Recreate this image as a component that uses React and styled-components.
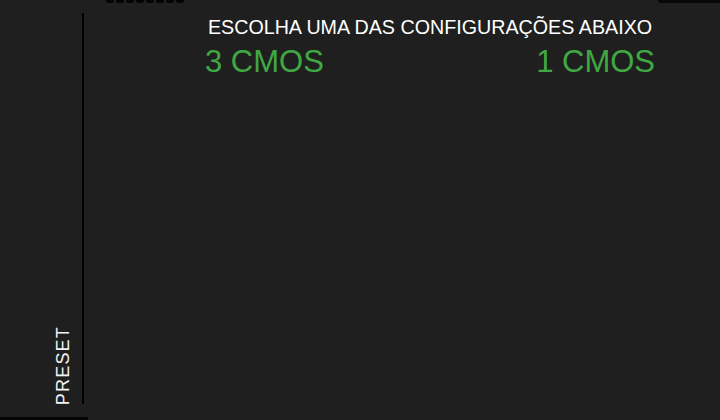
import styled, { createGlobalStyle } from "styled-components";

const GlobalStyle = createGlobalStyle`
  html, body {
    margin: 0;
    padding: 0;
    background: #1f1f1f;
  }
  body {
    font-family: "Liberation Sans", Arial, sans-serif;
  }
`;

const App = () => {
  return (
    <Screen>
      <GlobalStyle />
      <TopBumps>
        {Array.from({ length: 8 }).map((_, i) => (
          <Bump key={i} />
        ))}
      </TopBumps>
      <TopEdge />
      <Sidebar>
        <SideLabel>PRESET</SideLabel>
      </Sidebar>
      <BottomEdge />
      <Main>
        <Panel>
          <Title>ESCOLHA UMA DAS CONFIGURAÇÕES ABAIXO</Title>
          <Options>
            <Option>3 CMOS</Option>
            <Option>1 CMOS</Option>
          </Options>
        </Panel>
      </Main>
    </Screen>
  );
};

const Screen = styled.div`
  position: relative;
  width: 720px;
  height: 420px;
  overflow: hidden;
  display: flex;
  background: #1f1f1f;
`;

const TopBumps = styled.div`
  position: absolute;
  top: -2px;
  left: 106px;
  display: flex;
  gap: 2px;
`;

const Bump = styled.div`
  width: 8px;
  height: 5px;
  border-radius: 3px;
  background: #050505;
`;

const TopEdge = styled.div`
  position: absolute;
  top: 0;
  right: 0;
  width: 62px;
  height: 3px;
  border-bottom-left-radius: 3px;
  background: #080808;
`;

const BottomEdge = styled.div`
  position: absolute;
  left: 0;
  bottom: 0;
  width: 88px;
  height: 3px;
  background: #050505;
`;

const Sidebar = styled.div`
  width: 72px;
  margin: 13px 0 16px;
  padding-right: 10px;
  border-right: 2px solid #000;
  display: flex;
  align-items: flex-end;
  justify-content: flex-end;
`;

const SideLabel = styled.div`
  writing-mode: vertical-rl;
  transform: rotate(180deg);
  color: #f2f2f2;
  font-size: 18px;
  letter-spacing: 1.2px;
  line-height: 1;
  margin-bottom: -1px;
`;

const Main = styled.div`
  flex: 1;
  padding: 16px 0 0 121px;
`;

const Panel = styled.div`
  width: 450px;
  display: flex;
  flex-direction: column;
`;

const Title = styled.div`
  color: #ffffff;
  font-size: 19.7px;
  text-align: center;
  line-height: 22px;
  white-space: nowrap;
`;

const Options = styled.div`
  display: flex;
  justify-content: space-between;
  margin-top: 6px;
`;

const Option = styled.div`
  color: #3fa843;
  font-size: 31px;
  line-height: 36px;
  cursor: pointer;
`;

export default App;
